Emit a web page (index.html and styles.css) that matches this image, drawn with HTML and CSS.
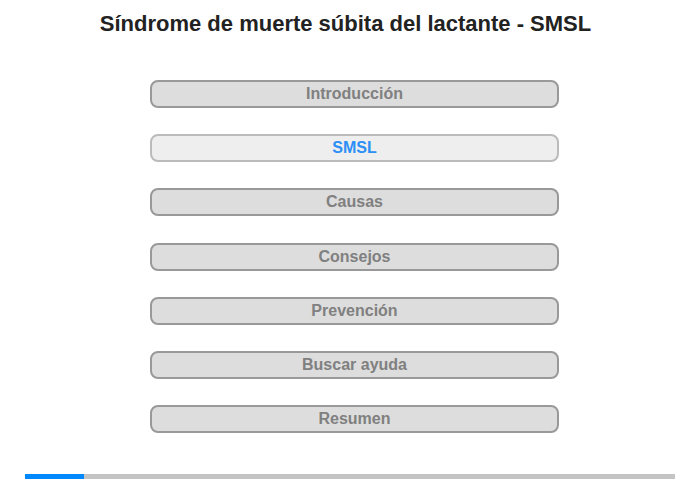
FILE: index.html
```html
<!DOCTYPE html>
<html lang="es">
<head>
<meta charset="UTF-8">
<meta name="viewport" content="width=device-width, initial-scale=1.0">
<title>Síndrome de muerte súbita del lactante - SMSL</title>
<link rel="stylesheet" href="styles.css">
</head>
<body>
    <div class="page">
        <h1 class="title">Síndrome de muerte súbita del lactante - SMSL</h1>
        <nav class="menu">
            <a class="menu-item" href="#">Introducción</a>
            <a class="menu-item active" href="#">SMSL</a>
            <a class="menu-item" href="#">Causas</a>
            <a class="menu-item" href="#">Consejos</a>
            <a class="menu-item" href="#">Prevención</a>
            <a class="menu-item" href="#">Buscar ayuda</a>
            <a class="menu-item" href="#">Resumen</a>
        </nav>
        <div class="progress">
            <div class="progress-fill" style="width: 9%"></div>
        </div>
    </div>
</body>
</html>
```

FILE: styles.css
```css
body {
    font-family: "Liberation Sans", Arial, sans-serif;
    margin: 0;
    padding: 0;
    background-color: #fff;
}

.page {
    width: 700px;
    height: 480px;
    display: flex;
    flex-direction: column;
}

.title {
    margin: 11px 0 0 -9px;
    font-size: 22px;
    line-height: 26px;
    font-weight: bold;
    color: #222;
    text-align: center;
}

.menu {
    display: flex;
    flex-direction: column;
    gap: 26.2px;
    width: 409px;
    margin: 43px 0 0 150px;
}

.menu-item {
    display: block;
    box-sizing: border-box;
    height: 28px;
    line-height: 24px;
    border: 2px solid #999;
    border-radius: 8px;
    background-color: #ddd;
    color: #808080;
    font-size: 16px;
    font-weight: bold;
    text-align: center;
    text-decoration: none;
}

.menu-item.active {
    background-color: #eee;
    border-color: #bbb;
    color: #2b8ff5;
}

.progress {
    height: 5px;
    margin: 41px 25px 0 25px;
    background-color: #c4c4c4;
}

.progress-fill {
    height: 100%;
    background-color: #0088ff;
}
```
